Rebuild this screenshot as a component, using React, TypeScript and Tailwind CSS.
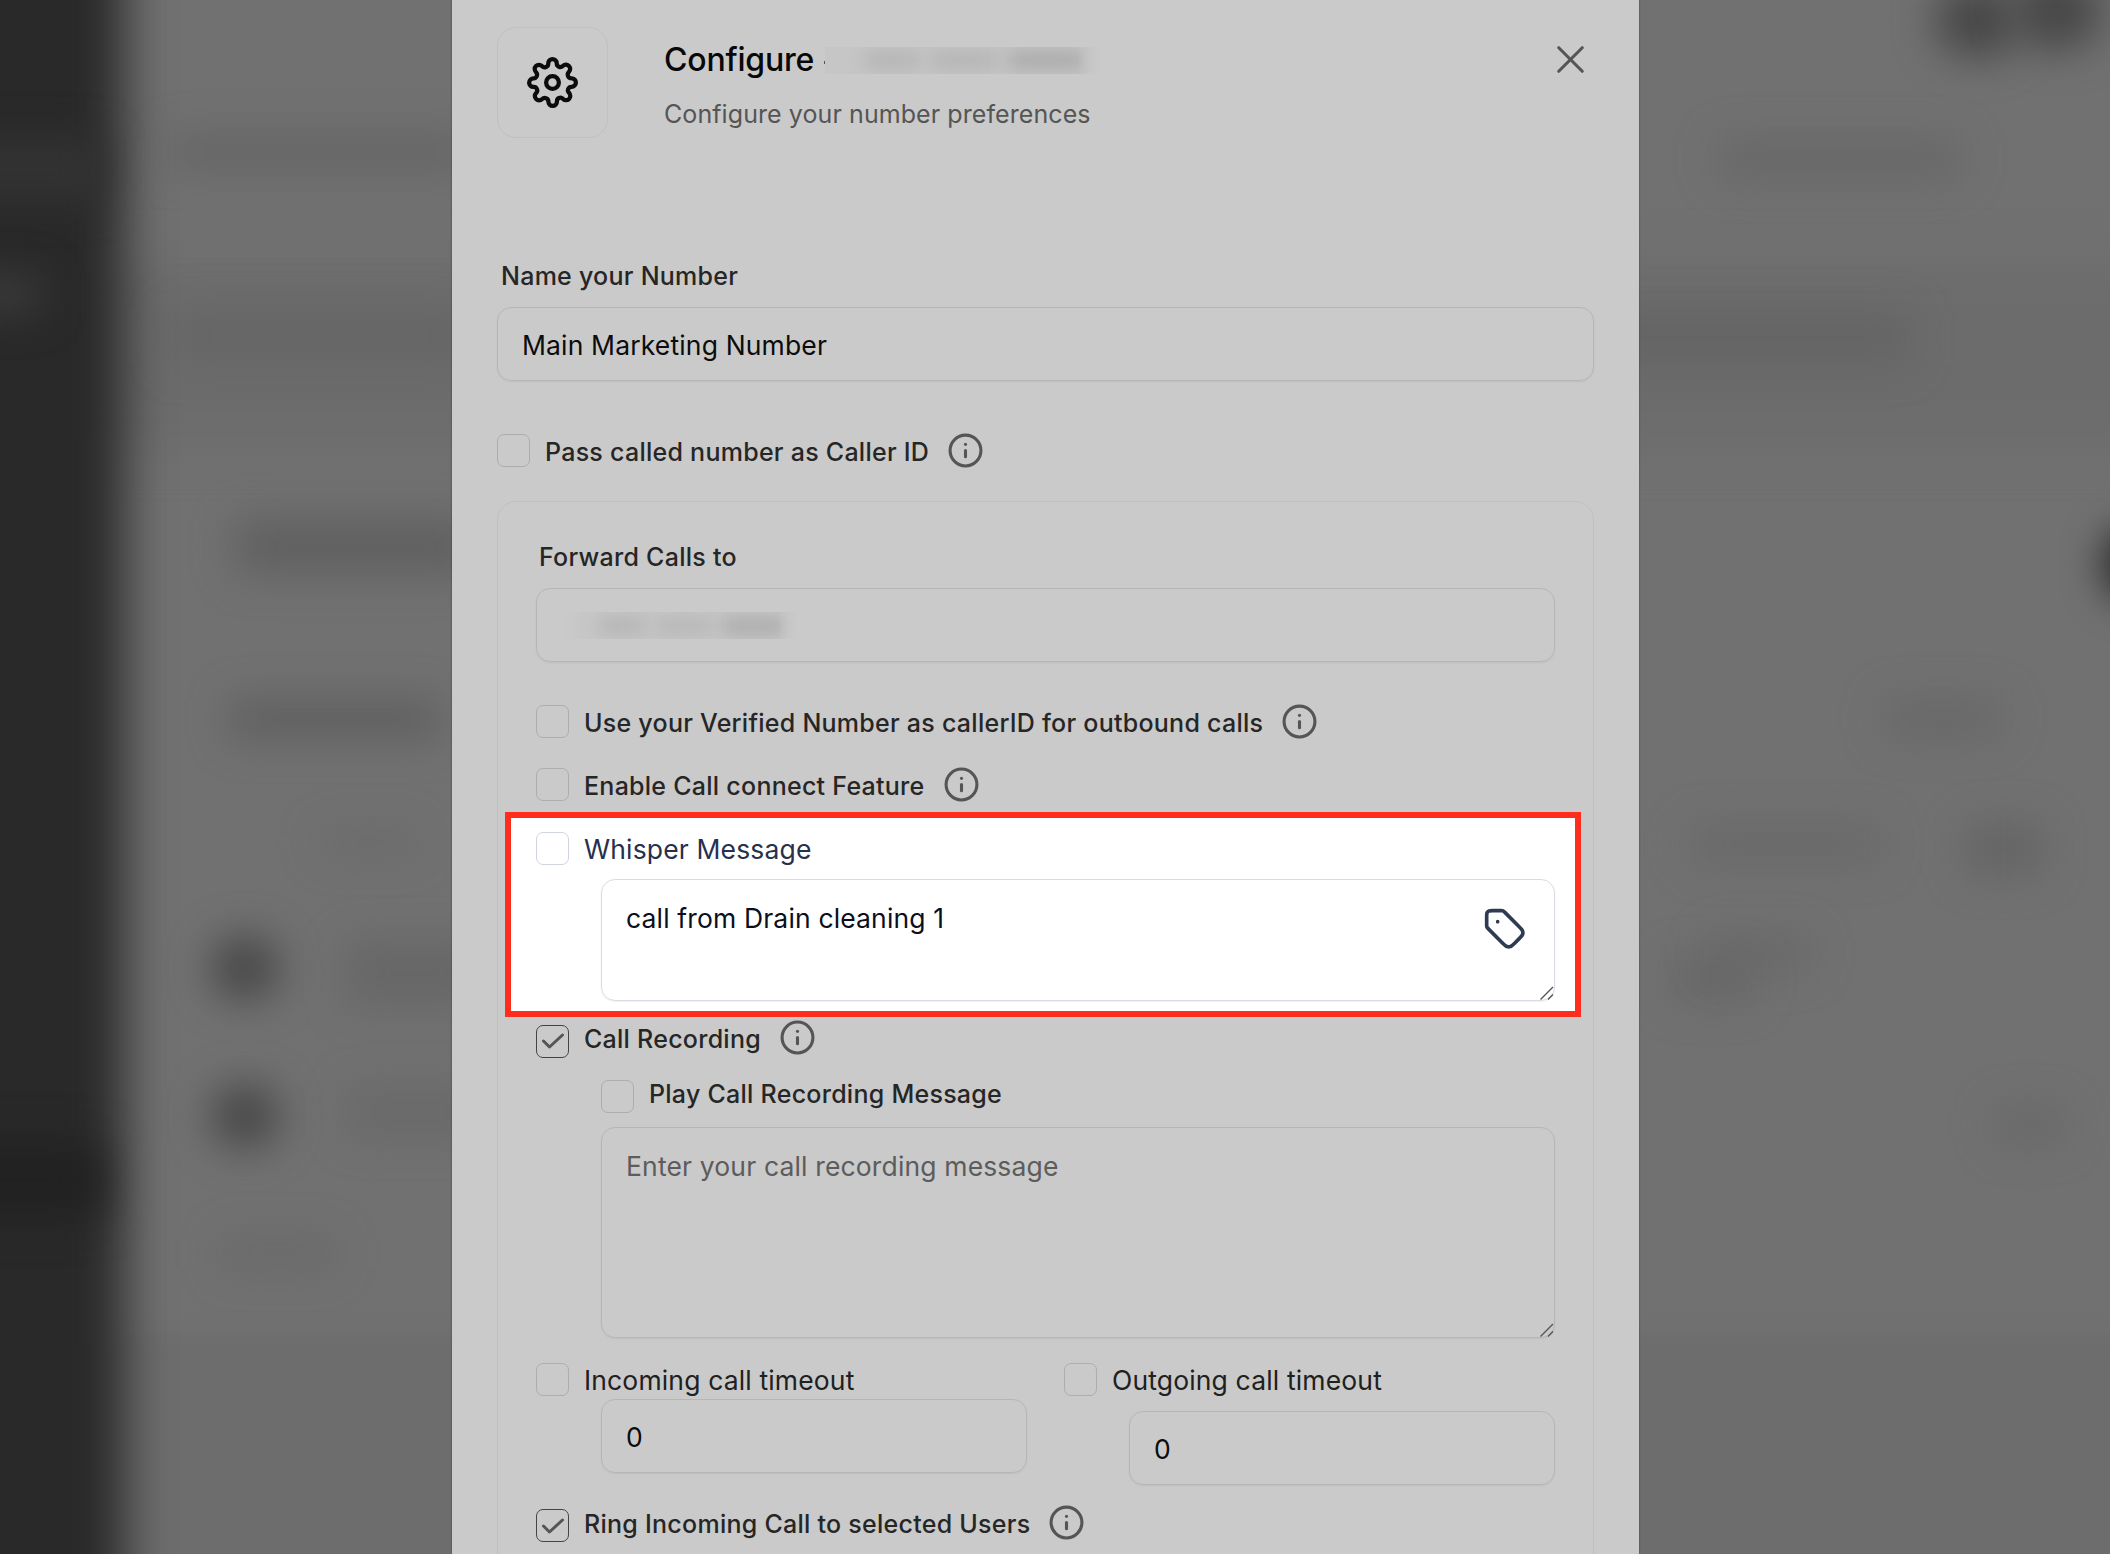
import type { ReactNode } from 'react';
import clsx from 'clsx';
import { Info, X } from 'lucide-react';
import { FiSettings } from 'react-icons/fi';

// soft shapes of the page that sits behind the modal
const backdropShapes = [
  'left-[170px] top-[136px] w-[300px] h-[32px] bg-[#5c5c5c]/65',
  'left-[170px] top-[308px] w-[300px] h-[56px] bg-[#606060]/45',
  'left-[236px] top-[518px] w-[240px] h-[56px] bg-[#555555]/60',
  'left-[230px] top-[700px] w-[210px] h-[38px] bg-[#555555]/65',
  'left-[320px] top-[828px] w-[100px] h-[28px] bg-[#5c5c5c]/30',
  'left-[345px] top-[940px] w-[140px] h-[66px] bg-[#5c5c5c]/45',
  'left-[345px] top-[1086px] w-[140px] h-[52px] bg-[#5c5c5c]/35',
  'left-[220px] top-[1236px] w-[115px] h-[34px] bg-[#5c5c5c]/35',
  'left-[211px] top-[936px] w-[68px] h-[64px] rounded-full bg-[#474747]',
  'left-[211px] top-[1084px] w-[68px] h-[64px] rounded-full bg-[#474747]',
  'left-[1935px] top-[-18px] w-[84px] h-[76px] rounded-full bg-[#474747]',
  'left-[2012px] top-[-30px] w-[90px] h-[80px] rounded-full bg-[#474747]',
  'left-[2104px] top-[526px] w-[80px] h-[76px] rounded-full bg-[#1f1f1f]',
  'left-[1720px] top-[140px] w-[240px] h-[38px] bg-[#606060]/60',
  'left-[1600px] top-[312px] w-[310px] h-[52px] bg-[#5c5c5c]/45',
  'left-[1885px] top-[700px] w-[115px] h-[36px] bg-[#606060]/60',
  'left-[1690px] top-[826px] w-[190px] h-[36px] bg-[#606060]/50',
  'left-[1966px] top-[824px] w-[76px] h-[50px] bg-[#5c5c5c]/60',
  'left-[1670px] top-[960px] w-[80px] h-[40px] bg-[#606060]/60',
  'left-[1710px] top-[936px] w-[100px] h-[34px] bg-[#606060]/50',
  'left-[1996px] top-[1108px] w-[66px] h-[34px] bg-[#606060]/60',
];

function Backdrop() {
  return (
    <div className="absolute inset-0 overflow-hidden bg-[#717171]">
      <div className="absolute -inset-x-16 top-[265px] h-[180px] bg-[#6c6c6c] blur-[24px]" />
      <div className="absolute -inset-x-16 top-[1335px] h-[300px] bg-[#6d6d6d] blur-[10px]" />
      <div className="absolute -left-24 -top-24 h-[1750px] w-[220px] bg-[#292929] blur-[24px]" />
      <div className="absolute -left-16 top-[140px] h-[60px] w-[165px] bg-[#333333] blur-[20px]" />
      <div className="absolute -left-16 top-[276px] h-[36px] w-[105px] bg-[#3c3c3c] blur-[20px]" />
      <div className="absolute -left-16 top-[1145px] h-[70px] w-[165px] bg-[#212121] blur-[22px]" />
      {backdropShapes.map((shape) => (
        <div key={shape} className={clsx('absolute blur-[20px]', shape)} />
      ))}
    </div>
  );
}

function Checkbox({ checked, className }: { checked?: boolean; className?: string }) {
  return (
    <span
      className={clsx(
        'flex size-[33px] shrink-0 items-center justify-center rounded-[7px] border',
        checked ? 'border-[#444]' : 'border-[#adadad]',
        className,
      )}
    >
      {checked && (
        <svg viewBox="0 0 24 16" className="h-4 w-6" fill="none" stroke="#555" strokeWidth="3" strokeLinecap="round" strokeLinejoin="round">
          <path d="M2.5 8 8.5 14 21.5 2" />
        </svg>
      )}
    </span>
  );
}

type OptionProps = {
  children: ReactNode;
  checked?: boolean;
  info?: boolean;
  className?: string;
  boxClass?: string;
  textClass?: string;
};

const labelClass = 'text-[25px] font-medium tracking-[0.26px] text-[#262626]';

function Option({ children, checked, info, className, boxClass, textClass }: OptionProps) {
  return (
    <div className={clsx('flex h-[34px] items-center', className)}>
      <Checkbox checked={checked} className={boxClass} />
      <span className={clsx('ml-[15px] whitespace-nowrap', textClass ?? clsx('pt-[3px]', labelClass))}>{children}</span>
      {info && <Info className="ml-[18px] size-[37px] shrink-0 text-[#555]" strokeWidth={2} />}
    </div>
  );
}

function ResizeHandle() {
  return (
    <svg viewBox="0 0 14 14" className="absolute bottom-0 right-0 size-[14px]" stroke="#555" strokeWidth="1.4">
      <path d="M.5 13.5 13 1M8 13.5l5-5" />
    </svg>
  );
}

const bodyText = 'text-[26.5px] tracking-[0.15px]';
const fieldClass = 'rounded-[14px] border border-[#b6b6b6] shadow-[0_1px_2px_rgba(0,0,0,0.06)]';
const inputClass = clsx('flex h-[74px] items-center pl-6 pt-px text-[#0c0c0c]', bodyText, fieldClass);

export default function App() {
  return (
    <div className="relative flex h-[1554px] w-[2110px] overflow-hidden pl-[452px] font-['Inter',sans-serif] leading-8">
      <Backdrop />
      <main className="relative h-[1554px] w-[1187px] overflow-hidden bg-[#cacaca] px-[45px] pt-[27px] shadow-[0_0_2px_rgba(0,0,0,0.4)]">
        <header className="flex h-[111px]">
          <div className="flex w-[111px] items-center justify-center rounded-[19px] border border-[#c0c0c0]">
            <FiSettings className="size-[51px] text-[#0c0c0c]" />
          </div>
          <div className="ml-[56px] pt-[13px]">
            <div className="flex h-10 items-center">
              <h1 className="text-[32px] font-medium tracking-[-0.2px] text-[#080808]">Configure</h1>
              <span className="ml-[10px] mt-1 h-[3px] w-px bg-[#555]" />
              <span className="flex h-[27px] w-[275px] items-center gap-[12px] overflow-hidden bg-[#c6c6c6] pl-[40px] [mask-image:linear-gradient(to_right,black_92%,transparent)]">
                <i className="h-4 w-[54px] bg-[#b2b2b2] blur-[9px]" />
                <i className="h-4 w-[66px] bg-[#b2b2b2] blur-[9px]" />
                <i className="h-4 w-[76px] bg-[#a6a6a6] blur-[9px]" />
              </span>
            </div>
            <p className="mt-[18px] text-[25px] tracking-[0.08px] text-[#555]">Configure your number preferences</p>
          </div>
          <X className="ml-auto mt-[9px] size-[47px] text-[#555]" strokeWidth={1.6} />
        </header>

        <label className={clsx('mt-[122px] block pl-1', labelClass)}>Name your Number</label>
        <div className={clsx('mt-[15px]', inputClass)}>Main Marketing Number</div>

        <Option className="mt-[52px]" info>Pass called number as Caller ID</Option>

        <section className="mt-[34px] h-[1100px] rounded-[19px] border border-[#c0c0c0] px-[38px] pt-[39px]">
          <label className={clsx('block pl-[3px]', labelClass)}>Forward Calls to</label>
          <div className={clsx('mt-[15px]', inputClass)}>
            <span className="flex h-[27px] w-[236px] items-center gap-[12px] overflow-hidden bg-[#c7c7c7] pl-[38px] [mask-image:linear-gradient(to_right,transparent,black_8%,black_92%,transparent)]">
              <i className="h-3.5 w-[46px] bg-[#b0b0b0] blur-[9px]" />
              <i className="h-3.5 w-[54px] bg-[#b2b2b2] blur-[9px]" />
              <i className="h-3.5 w-[62px] bg-[#a4a4a4] blur-[9px]" />
            </span>
          </div>

          <Option className="mt-[42px]" info>Use your Verified Number as callerID for outbound calls</Option>
          <Option className="mt-[29px]" info>Enable Call connect Feature</Option>

          {/* highlighted whisper settings */}
          <div className="-ml-[31px] -mr-[26px] mt-[11px] h-[205px] border-[6px] border-[#ff2d1e] bg-white pl-[25px] pr-5 pt-[13px]">
            <Option boxClass="border-[#d0d5dd]" textClass={clsx('pt-px text-[#27304d]', bodyText)}>Whisper Message</Option>
            <div className={clsx('relative ml-[65px] mt-[14px] h-[122px] rounded-[14px] border border-[#d9dbe2] pl-6 pt-[22px] text-[#0b0f1c] shadow-[0_1px_2px_rgba(16,24,40,0.06)]', bodyText)}>
              call from Drain cleaning 1
              <svg viewBox="0 0 24 24" className="absolute right-[27px] top-[27px] size-11" fill="none" stroke="#2f3b52" strokeWidth="2" strokeLinecap="round" strokeLinejoin="round">
                <path d="M8 8h.01M2 5.2v4.475c0 .489 0 .733.055.963.05.204.13.4.24.579.123.201.296.374.642.72l7.669 7.669c1.188 1.188 1.782 1.782 2.467 2.004a3 3 0 0 0 1.854 0c.685-.222 1.28-.816 2.467-2.004l2.212-2.212c1.188-1.188 1.782-1.782 2.004-2.467a3 3 0 0 0 0-1.854c-.222-.685-.816-1.28-2.004-2.467l-7.669-7.669c-.346-.346-.519-.519-.72-.642a2 2 0 0 0-.579-.24C10.409 2 10.165 2 9.676 2H5.2c-1.12 0-1.68 0-2.108.218a2 2 0 0 0-.874.874C2 3.52 2 4.08 2 5.2Z" />
              </svg>
              <ResizeHandle />
            </div>
          </div>

          <Option className="mt-[3px]" boxClass="mt-2" checked info>Call Recording</Option>
          <div className="pl-[65px]">
            <Option className="mt-[25px]" textClass={clsx('-mt-[5px]', labelClass)}>Play Call Recording Message</Option>
            <div className={clsx('relative mt-[14px] h-[211px] pl-6 pt-[22px] text-[#5c5c5c]', bodyText, fieldClass)}>
              Enter your call recording message
              <ResizeHandle />
            </div>
          </div>

          <div className="mt-6 grid grid-cols-2 gap-[37px]">
            <div>
              <Option textClass={clsx('pt-px text-[#202020]', bodyText)}>Incoming call timeout</Option>
              <div className={clsx('ml-[65px] mt-[3px]', inputClass)}>0</div>
            </div>
            <div>
              <Option textClass={clsx('pt-px text-[#202020]', bodyText)}>Outgoing call timeout</Option>
              <div className={clsx('ml-[65px] mt-[15px]', inputClass)}>0</div>
            </div>
          </div>

          <Option className="mt-5" boxClass="mt-[7px]" checked info>Ring Incoming Call to selected Users</Option>
        </section>
      </main>
    </div>
  );
}
